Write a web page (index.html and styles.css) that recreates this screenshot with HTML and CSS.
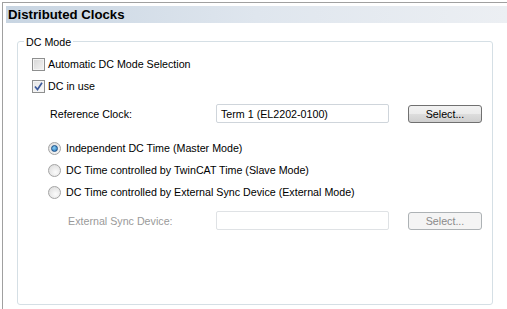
FILE: index.html
```html
<!DOCTYPE html>
<html lang="en">

<head>
    <meta charset="UTF-8">
    <title>Distributed Clocks</title>
    <link rel="stylesheet" href="styles.css">
</head>

<body>
    <div class="frame">
        <div class="header">Distributed Clocks</div>
        <div class="group">
            <span class="legend">DC Mode</span>
            <label class="row check-row">
                <span class="checkbox"></span>
                <span>Automatic DC Mode Selection</span>
            </label>
            <label class="row check-row">
                <span class="checkbox checked">
                    <svg width="9" height="9" viewBox="0 0 9 9">
                        <path d="M1 4.5 L3.5 7.5 L8 0.8" fill="none" stroke="#3c5a9c" stroke-width="1.7" />
                    </svg>
                </span>
                <span>DC in use</span>
            </label>
            <div class="field-row clock-row">
                <span class="field-label">Reference Clock:</span>
                <div class="textbox">Term 1 (EL2202-0100)</div>
                <button class="btn">Select...</button>
            </div>
            <div class="radios">
                <label class="row radio-row">
                    <span class="radio selected"><span class="dot"></span></span>
                    <span>Independent DC Time (Master Mode)</span>
                </label>
                <label class="row radio-row">
                    <span class="radio"></span>
                    <span>DC Time controlled by TwinCAT Time (Slave Mode)</span>
                </label>
                <label class="row radio-row">
                    <span class="radio"></span>
                    <span>DC Time controlled by External Sync Device (External Mode)</span>
                </label>
            </div>
            <div class="field-row sync-row disabled">
                <span class="field-label">External Sync Device:</span>
                <div class="textbox"></div>
                <button class="btn" disabled>Select...</button>
            </div>
        </div>
    </div>
</body>

</html>
```

FILE: styles.css
```css
body {
    margin: 0;
    font-family: "Liberation Sans", Arial, sans-serif;
    font-size: 10.7px;
    color: #000;
    background-color: #fff;
}

.frame {
    margin: 2px 0 0 2px;
    height: 307px;
    padding: 3px 0 0 3px;
    border-top: 1px solid #a0a0a0;
    border-left: 1px solid #a0a0a0;
    box-sizing: border-box;
}

.header {
    height: 17px;
    line-height: 17px;
    padding-left: 2px;
    font-size: 13.2px;
    font-weight: bold;
    background: linear-gradient(to right, #c8d5e2, #dfe6ee 50%, #eceff3);
}

.group {
    position: relative;
    margin: 18px 0 0 11px;
    width: 476px;
    height: 264px;
    padding: 11px 0 0 14px;
    border: 1px solid #d5dfe5;
    border-radius: 3px;
    box-sizing: border-box;
}

.legend {
    position: absolute;
    top: -7px;
    left: 6px;
    padding: 0 2px;
    background-color: #fff;
    line-height: 14px;
}

.row {
    display: flex;
    align-items: center;
    height: 22px;
}

.checkbox {
    width: 11px;
    height: 11px;
    margin-right: 3px;
    border: 1px solid #8e8f8f;
    background: linear-gradient(135deg, #d6d6d6, #f4f4f4);
    box-shadow: inset 0 0 0 1px #f4f4f4;
    display: flex;
    align-items: center;
    justify-content: center;
}

.checkbox.checked {
    background: linear-gradient(135deg, #e4e4e4, #fafafa);
}

.field-row {
    display: flex;
    align-items: center;
    height: 19px;
}

.clock-row {
    margin-top: 7px;
    padding-left: 18px;
}

.field-label {
    width: 166px;
}

.textbox {
    width: 173px;
    height: 19px;
    line-height: 18px;
    padding-left: 4px;
    border: 1px solid #cfd5db;
    border-radius: 2px;
    box-sizing: border-box;
}

.btn {
    margin-left: 19px;
    width: 74px;
    height: 18px;
    padding: 0;
    font-family: inherit;
    font-size: 10.7px;
    color: #000;
    border: 1px solid #707070;
    border-radius: 3px;
    background: linear-gradient(#f2f2f2, #ebebeb 50%, #dddddd 51%, #cfcfcf);
}

.radios {
    margin-top: 14px;
    padding-left: 16px;
}

.radio {
    width: 11px;
    height: 11px;
    margin-right: 5px;
    border: 1px solid #a4a4a4;
    border-radius: 50%;
    background: radial-gradient(circle at 60% 65%, #fbfbfb, #d8d8d8);
    display: flex;
    align-items: center;
    justify-content: center;
}

.radio .dot {
    width: 5px;
    height: 5px;
    border-radius: 50%;
    background: radial-gradient(circle at 40% 35%, #8ad0f5, #1f6cb5);
    border: 1px solid #1c4f86;
}

.sync-row {
    margin-top: 8px;
    padding-left: 36px;
}

.sync-row .field-label {
    width: 148px;
}

.disabled {
    color: #9a9a9a;
}

.disabled .textbox {
    border-color: #dfe2e5;
}

.btn:disabled {
    color: #8a8a8a;
    border-color: #adb2b5;
    background: #f4f4f4;
}
```
